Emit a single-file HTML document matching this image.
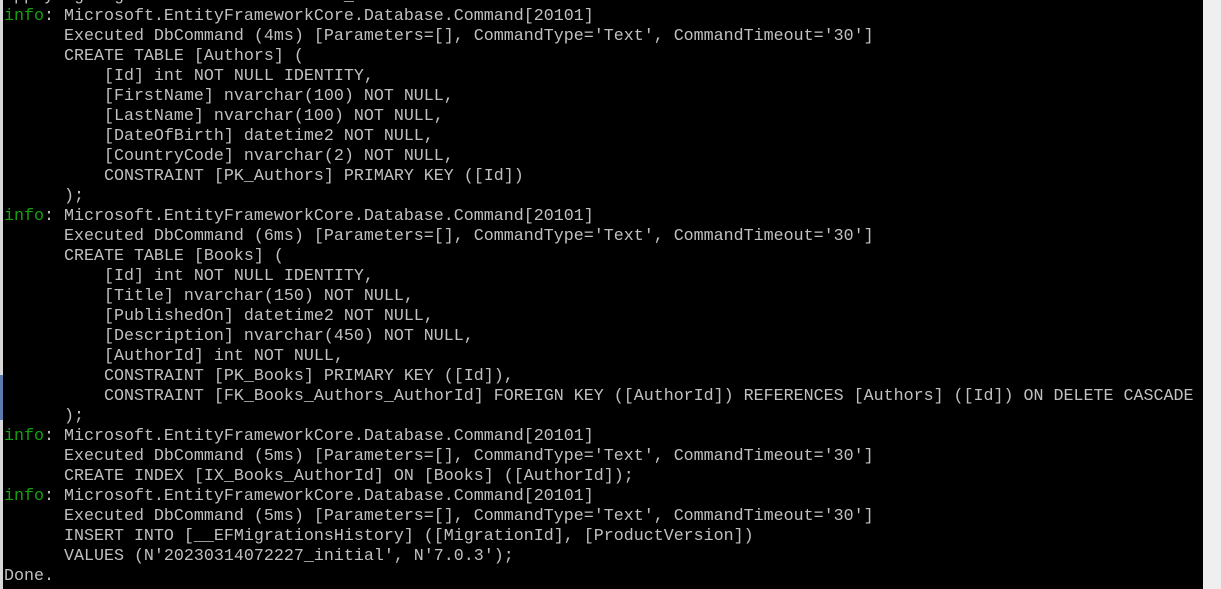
<!DOCTYPE html>
<html><head><meta charset="utf-8"><style>
html,body{margin:0;padding:0;width:1221px;height:589px;overflow:hidden;background:#000;}
#lstrip{position:absolute;left:0;top:0;width:3px;height:589px;background:#d8d8d8;}
#lblue{position:absolute;left:0;top:375px;width:3px;height:45px;background:#5a7ab0;}
#rstrip{position:absolute;left:1203px;top:0;width:18px;height:589px;background:#efefef;}
pre{position:absolute;left:4px;top:-13px;margin:0;font-family:"Liberation Mono",monospace;font-size:16.67px;line-height:20px;color:#c0c0c0;white-space:pre;}
.g{color:#13a10e;}
</style></head><body>
<div id="lstrip"></div><div id="lblue"></div><div id="rstrip"></div>
<pre>Applying migration '20230314072227_initial'.
<span class="g">info</span>: Microsoft.EntityFrameworkCore.Database.Command[20101]
      Executed DbCommand (4ms) [Parameters=[], CommandType='Text', CommandTimeout='30']
      CREATE TABLE [Authors] (
          [Id] int NOT NULL IDENTITY,
          [FirstName] nvarchar(100) NOT NULL,
          [LastName] nvarchar(100) NOT NULL,
          [DateOfBirth] datetime2 NOT NULL,
          [CountryCode] nvarchar(2) NOT NULL,
          CONSTRAINT [PK_Authors] PRIMARY KEY ([Id])
      );
<span class="g">info</span>: Microsoft.EntityFrameworkCore.Database.Command[20101]
      Executed DbCommand (6ms) [Parameters=[], CommandType='Text', CommandTimeout='30']
      CREATE TABLE [Books] (
          [Id] int NOT NULL IDENTITY,
          [Title] nvarchar(150) NOT NULL,
          [PublishedOn] datetime2 NOT NULL,
          [Description] nvarchar(450) NOT NULL,
          [AuthorId] int NOT NULL,
          CONSTRAINT [PK_Books] PRIMARY KEY ([Id]),
          CONSTRAINT [FK_Books_Authors_AuthorId] FOREIGN KEY ([AuthorId]) REFERENCES [Authors] ([Id]) ON DELETE CASCADE
      );
<span class="g">info</span>: Microsoft.EntityFrameworkCore.Database.Command[20101]
      Executed DbCommand (5ms) [Parameters=[], CommandType='Text', CommandTimeout='30']
      CREATE INDEX [IX_Books_AuthorId] ON [Books] ([AuthorId]);
<span class="g">info</span>: Microsoft.EntityFrameworkCore.Database.Command[20101]
      Executed DbCommand (5ms) [Parameters=[], CommandType='Text', CommandTimeout='30']
      INSERT INTO [__EFMigrationsHistory] ([MigrationId], [ProductVersion])
      VALUES (N'20230314072227_initial', N'7.0.3');
Done.</pre>
</body></html>
